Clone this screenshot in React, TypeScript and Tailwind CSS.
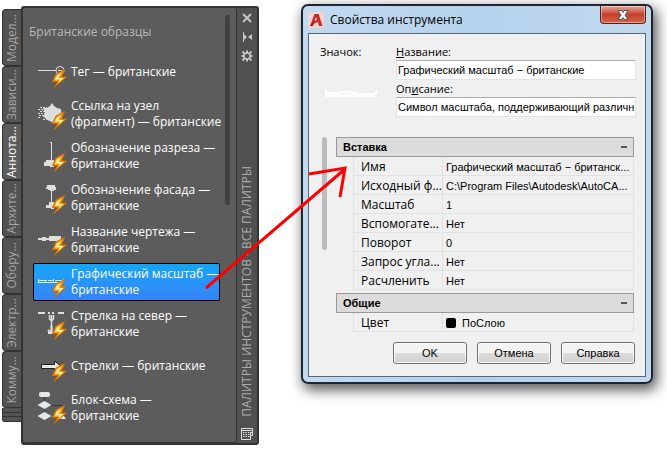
import type { ReactNode } from 'react';
import clsx from 'clsx';

const tabs = [
  'Модел...',
  'Зависи...',
  'Аннота...',
  'Архите...',
  'Обору...',
  'Электр...',
  'Комму...',
];

const Bolt = () => (
  <g>
    <path
      d="M28.500 13.500l-8.500 4.500-3.500 7.500h5.500l-4 6 12.500-10.500h-5z"
      fill="#fb9a12"
      stroke="#c96a00"
      strokeWidth="1"
      strokeLinejoin="round"
    />
    <path d="M25 17l-4 2.500-2 4h5l-1.500 3.500 5-5h-5z" fill="#fff4a8" />
  </g>
);

const tools: { lines: string[]; icon: ReactNode; selected?: boolean }[] = [
  {
    lines: ['Тег — британские'],
    icon: (
      <g stroke="#dedede" fill="none">
        <path d="M2 14.500h18" />
        <circle cx="24" cy="14.500" r="4" />
        <path d="M22 14.500h4" />
      </g>
    ),
  },
  {
    lines: ['Ссылка на узел', '(фрагмент) — британские'],
    icon: (
      <g fill="#dedede">
        <path d="M7 10h4l3-2 2-3 2 3 3 2 4 1 1 8-4 3-5 3-3-2-3-1-3-3H7l2-4z" />
        <path
          d="M4 9.500h7M2 11.500h7M4 13.500h5M2 15.500h7M3 17.500h6M2 19.500h3M7 21.500h3"
          stroke="#dedede"
          strokeDasharray="2 1"
        />
      </g>
    ),
  },
  {
    lines: ['Обозначение разреза —', 'британские'],
    icon: (
      <g fill="#dedede">
        <path d="M14 2h2v20h-1V3h-1z" />
        <path d="M10 20h8v7h-4v-1H8v-4h2z" />
      </g>
    ),
  },
  {
    lines: ['Обозначение фасада —', 'британские'],
    icon: (
      <g fill="#dedede">
        <path d="M11 3h8v2h1v3h-2v1h-4V8h-2V7h-2V5h1z" />
        <path d="M15 8h1v14h-1z" />
        <path d="M13 20h5v7h-3v-1h-5v-3h3z" />
      </g>
    ),
  },
  {
    lines: ['Название чертежа —', 'британские'],
    icon: (
      <g fill="#dedede">
        <path d="M2 14h4v-1h4v1h3v-2h12v5H13v-1h-3v1H6v-1H2z" />
      </g>
    ),
  },
  {
    lines: ['Графический масштаб —', 'британские'],
    selected: true,
    icon: (
      <path
        d="M2.500 13v4M2 16.500h25M2 14.500h9M12 14.500h5M19 14.500h8M9.500 14v3M17.500 13v4M27.500 13v3"
        stroke="#dce8f5"
        fill="none"
      />
    ),
  },
  {
    lines: ['Стрелка на север —', 'британские'],
    icon: (
      <g stroke="#dedede" fill="none">
        <path d="M2 5h7M12 5h2M16 5h2M22 5h6" strokeWidth="2" />
        <path d="M13.500 7v4l2 2 2-2V7M15.500 7v17" strokeWidth="1.500" />
        <path d="M15.500 18v8M12 22l3 3h4M12 25h8" strokeWidth="2" />
      </g>
    ),
  },
  {
    lines: ['Стрелки — британские'],
    icon: (
      <path
        d="M5.500 14.500h13v-3.500l7 5.500-7 5.500v-3.500h-13z"
        fill="#e6e8ea"
        stroke="#1f2123"
        strokeWidth="1"
      />
    ),
  },
  {
    lines: ['Блок-схема —', 'британские'],
    icon: (
      <g>
        <path d="M8.500 5v19M8 13.500h17.500v12" stroke="#35383c" fill="none" />
        <rect x="3" y="0" width="11" height="5" rx="2" fill="#e4e7ea" />
        <path d="m8.500 9 7 4-7 4-7-4zM8.500 20l7 4-7 4-7-4z" fill="#e4e7ea" />
        <path d="m26 21 4 6h-8z" fill="#e4e7ea" />
      </g>
    ),
  },
];

const insertRows = [
  ['Имя', 'Графический масштаб − британск...'],
  ['Исходный ф...', 'C:\\Program Files\\Autodesk\\AutoCA...'],
  ['Масштаб', '1'],
  ['Вспомогате...', 'Нет'],
  ['Поворот', '0'],
  ['Запрос угла...', 'Нет'],
  ['Расчленить', 'Нет'],
];

const ToolItem = ({ lines, icon, selected }: (typeof tools)[number]) => (
  <li className="flex h-[42px] items-center">
    <button
      type="button"
      className={clsx(
        'flex h-[38px] w-[187px] items-center gap-[3px] whitespace-nowrap rounded-[2px] border pl-[2px] text-left leading-4 text-white',
        selected
          ? 'border-black bg-linear-to-b from-[#12a5f8] to-[#3583f8]'
          : 'border-transparent'
      )}
    >
      <svg width="32" height="32" viewBox="0 0 32 32" className="shrink-0">
        {icon}
        <Bolt />
      </svg>
      <span>
        {lines.map((line) => (
          <span key={line} className="block">
            {line}
          </span>
        ))}
      </span>
    </button>
  </li>
);

const ToolPalette = () => (
  <section className="mt-[6px] flex w-[259px] shrink-0 pl-[2px] font-['Open_Sans',sans-serif] text-[12px]">
    <div className="mt-[3px] flex w-[19px] flex-col">
      {tabs.map((tab, i) => (
        <button
          key={tab}
          type="button"
          className={clsx(
            'flex h-[57px] items-center justify-center rounded-l-[4px] border border-r-0 border-[#333]',
            i === 2
              ? 'bg-[#5c5c5c] text-white'
              : 'bg-[#535353] text-[#a6a6a6]'
          )}
        >
          <span className="rotate-180 whitespace-nowrap [writing-mode:vertical-rl]">
            {tab}
          </span>
        </button>
      ))}
      <div className="h-[5px] border-b border-l border-[#333] bg-[#535353]" />
      <div className="h-[4px] border-b border-l border-[#333] bg-[#535353]" />
      <div className="h-[5px] rounded-bl-[3px] border-b border-l border-[#333] bg-[#535353]" />
    </div>

    <div className="flex flex-1 rounded-[3px] border-2 border-[#333] bg-[#505050]">
      <div className="flex flex-1 justify-between rounded-[3px] border-r border-b border-[#333] bg-[#5c5c5c] pt-[7px] pr-[6px] pb-[13px] pl-[10px]">
        <div>
          <h2 className="-ml-1 h-9 pt-[9px] whitespace-nowrap leading-4 text-[#b9b9b9]">
            Британские образцы
          </h2>
          <ul>
            {tools.map((tool) => (
              <ToolItem key={tool.lines[0]} {...tool} />
            ))}
          </ul>
        </div>
        <div className="h-[190px] w-[5px] rounded-full bg-[#414141]" />
      </div>

      <div className="flex w-5 flex-col items-center pb-[2px] text-[#c4c4c4]">
        <button type="button" aria-label="Закрыть" className="h-[19px]">
          <svg width="12" height="12" viewBox="0 0 12 12">
            <path
              d="m2 2 8 8M10 2l-8 8"
              stroke="currentColor"
              strokeWidth="2"
            />
          </svg>
        </button>
        <button type="button" aria-label="Автоскрытие" className="h-[19px]">
          <svg width="12" height="12" viewBox="0 0 12 12" fill="currentColor">
            <path d="M2 1h1v10H2zM3 3l3 3-3 3zM11 3v6L7 6z" />
          </svg>
        </button>
        <button type="button" aria-label="Свойства" className="h-[19px]">
          <svg
            width="12"
            height="12"
            viewBox="0 0 12 12"
            fill="none"
            stroke="currentColor"
          >
            <circle cx="6" cy="6" r="3" strokeWidth="1.500" />
            <path
              d="M6 .5V3M6 9v2.500M.5 6H3M9 6h2.500M1.500 1.500l2.500 2.500M8 8l2.500 2.500M10.500 1.500 8 4M4 8l-2.500 2.500"
              strokeWidth="2"
            />
          </svg>
        </button>
        <h1 className="mt-auto mb-[10px] rotate-180 whitespace-nowrap leading-4 text-[#adadad] [writing-mode:vertical-rl]">
          ПАЛИТРЫ ИНСТРУМЕНТОВ - ВСЕ ПАЛИТРЫ
        </h1>
        <button type="button" aria-label="Палитры">
          <svg width="14" height="14" viewBox="0 0 14 14" fill="none">
            <path
              d="M1.500 1.500h11v7h-2v4h-9zM1 3.500h10.500M10.500 8.500v-3h2"
              stroke="#e0e0e0"
            />
            <path
              d="M3 5.500h7M3 7.500h7M3 9.500h7"
              stroke="#e0e0e0"
              strokeDasharray="1.500 1"
            />
          </svg>
        </button>
      </div>
    </div>
  </section>
);

const PropertyTable = ({
  title,
  rows,
}: {
  title: string;
  rows: ReactNode[][];
}) => (
  <table className="w-full table-fixed border-separate border-spacing-0">
    <colgroup>
      <col className="w-[17px]" />
      <col className="w-[89px]" />
      <col />
    </colgroup>
    <thead>
      <tr className="h-5">
        <th
          colSpan={3}
          className="border border-[#999] bg-[#dcdcdc] p-0 text-left"
        >
          <div className="flex h-[18px] items-center justify-between px-[6px]">
            {title}
            <span className="h-[2px] w-[6px] bg-[#555]" />
          </div>
        </th>
      </tr>
    </thead>
    <tbody>
      {rows.map(([name, value], i) => (
        <tr key={i} className="h-[19px] leading-4">
          <td className="p-0" />
          <th
            scope="row"
            className="whitespace-nowrap border-b border-l border-[#e2e2e2] p-0 pt-[2px] pl-[7px] text-left font-['Open_Sans',sans-serif] text-[12px] font-normal"
          >
            {name}
          </th>
          <td className="whitespace-nowrap border-x border-b border-[#e2e2e2] p-0 pt-[2px] pl-[3px]">
            {value}
          </td>
        </tr>
      ))}
    </tbody>
  </table>
);

const DialogButton = ({ children }: { children: ReactNode }) => (
  <button
    type="button"
    className="h-[22px] w-[74px] rounded-[3px] border border-[#707070] bg-linear-to-b from-[#f3f3f3] from-50% via-[#dddddd] via-50% to-[#cfcfcf] shadow-[inset_0_0_0_1px_#fafafa]"
  >
    {children}
  </button>
);

const ToolProperties = () => (
  <section className="mt-1 mr-[14px] ml-[42px] min-w-0 flex-1 rounded-[7px] border-2 border-[#1d2530] bg-linear-to-r from-[#c3daf0] via-[#b5d1ed] to-[#c3d9ee] px-[5px] pb-[5px] font-['Liberation_Sans',sans-serif] text-[11px] text-black shadow-[3px_5px_13px_1px_rgba(0,0,0,0.65)]">
    <header className="flex h-[27px] items-start gap-[6px]">
      <svg width="16" height="16" viewBox="0 0 16 16" className="mt-[6px]">
        <rect width="16" height="16" fill="#f3d4d0" />
        <path
          d="M2 14 6.500 2h4l4 12h-3.500l-1-4-4 1-1 3zM8 5 6.500 9l2.500-1z"
          fill="#c22a2b"
        />
        <path d="m2 14 3-3 5-1-5 2-1 2z" fill="#7d1218" />
      </svg>
      <h2 className="mt-[6px] flex-1 whitespace-nowrap font-['Open_Sans',sans-serif] text-[12px] leading-4">
        Свойства инструмента
      </h2>
      <button
        type="button"
        aria-label="Закрыть"
        className="flex h-[18px] w-[46px] items-center justify-center rounded-b-[4px] border border-t-0 border-[#4d2525] bg-linear-to-b from-[#e5a79a] from-0% via-[#c3402a] via-50% to-[#d9644c] shadow-[inset_0_0_0_1px_rgba(255,255,255,0.4)]"
      >
        <svg width="12" height="10" viewBox="0 0 12 10">
          <path
            d="M1 .5h3.500L6 2.500 7.500.5H11L8 5l3 4.500H7.500L6 7.500l-1.500 2H1L4 5z"
            fill="#fff"
            stroke="#53565f"
            strokeWidth="1"
          />
        </svg>
      </button>
    </header>

    <form className="border border-[#56677a] bg-[#f0f0f0] px-[9px] pt-2 pb-3">
      <div className="flex">
        <div className="w-[78px] pl-[2px]">
          <p className="pt-[2px] font-['Open_Sans',sans-serif] leading-4">
            Значок:
          </p>
          <svg width="60" height="12" viewBox="0 0 60 12" className="mt-7">
            <path
              d="M6 2v6h48l3-6M6 5h14l2-1h8l2 1h6M40 6h14M6 7h48"
              fill="none"
              stroke="#fff"
              strokeWidth="2"
              strokeLinejoin="round"
            />
          </svg>
        </div>
        <div className="flex min-w-0 flex-1 flex-col">
          <label
            htmlFor="tool-name"
            className="pt-[2px] font-['Open_Sans',sans-serif] leading-4"
          >
            <u>Н</u>азвание:
          </label>
          <input
            id="tool-name"
            defaultValue="Графический масштаб − британские"
            className="h-5 w-full border border-[#e2e3ea] border-t-[#abadb3] bg-white pl-px"
          />
          <label
            htmlFor="tool-description"
            className="pt-[1px] font-['Open_Sans',sans-serif] leading-4"
          >
            Оп<u>и</u>сание:
          </label>
          <input
            id="tool-description"
            defaultValue="Символ масштаба, поддерживающий различн"
            className="h-5 w-full border border-[#e2e3ea] border-t-[#abadb3] bg-white pl-px"
          />
        </div>
      </div>

      <div className="mt-5 flex gap-[9px] pl-[4px]">
        <div className="h-[113px] w-[5px] rounded-full bg-[#bcbcbc]" />
        <div className="flex min-w-0 flex-1 flex-col gap-[3px] pr-[2px]">
          <PropertyTable title="Вставка" rows={insertRows} />
          <PropertyTable
            title="Общие"
            rows={[
              [
                'Цвет',
                <span key="color" className="flex items-center gap-[6px]">
                  <span className="size-[10px] rounded-[2px] bg-black" />
                  ПоСлою
                </span>,
              ],
            ]}
          />
        </div>
      </div>

      <div className="mt-[10px] flex justify-end gap-[10px] pr-px">
        <DialogButton>OK</DialogButton>
        <DialogButton>Отмена</DialogButton>
        <DialogButton>Справка</DialogButton>
      </div>
    </form>
  </section>
);

const App = () => (
  <main className="relative flex items-start bg-white pb-[6px]">
    <ToolPalette />
    <ToolProperties />
    {/* callout from the selected tool to its properties */}
    <svg
      width="150"
      height="130"
      viewBox="0 0 150 130"
      className="pointer-events-none absolute top-[163px] left-[201px]"
      fill="none"
      stroke="#f00"
      strokeWidth="3"
    >
      <path d="M5 125 144 6M108 11l36-6-5 29" />
    </svg>
  </main>
);

export default App;
